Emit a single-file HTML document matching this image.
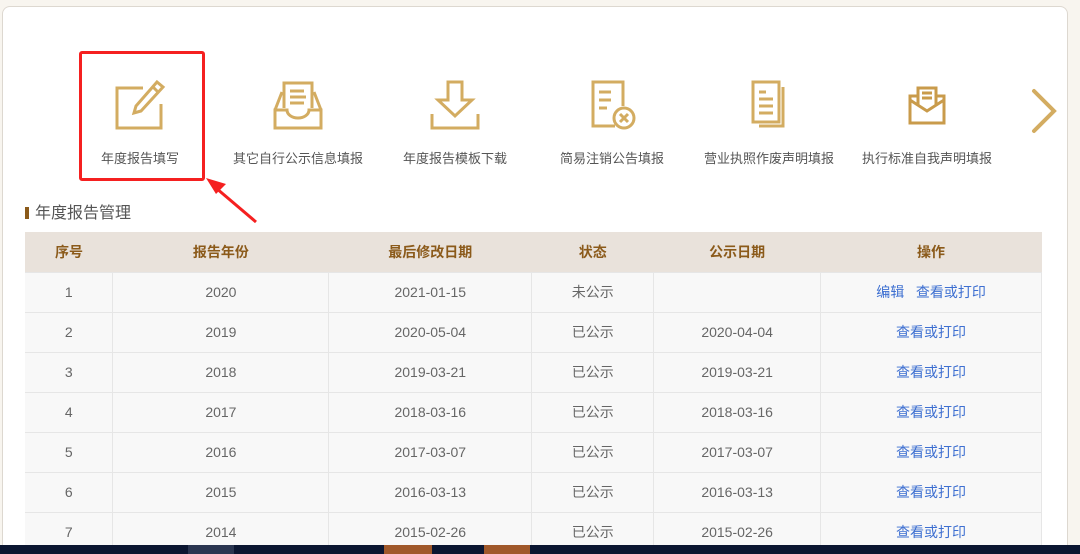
<!DOCTYPE html>
<html><head><meta charset="utf-8"><style>
*{margin:0;padding:0;box-sizing:border-box}
html,body{width:1080px;height:554px;overflow:hidden}
body{background:#f8f5ef;font-family:"Liberation Sans","Noto Sans CJK SC",sans-serif;position:relative}
.card{position:absolute;left:2px;top:6px;width:1066px;height:548px;background:#fff;border:1px solid #ddd8d0;border-bottom:none;border-radius:8px 8px 0 0}
.item{position:absolute;top:78px;width:150px;text-align:center;font-size:13px;color:#555}
.item svg{display:block;margin:0 auto}
.item span{display:block;position:absolute;top:70px;width:150px;left:0}
.red{position:absolute;left:79px;top:51px;width:126px;height:130px;border:3px solid #f52020;border-radius:3px}
.title{position:absolute;left:25px;top:199px;font-size:16px;color:#555}
.title:before{content:"";display:inline-block;width:4px;height:12px;background:#8b5a1a;margin-right:6px;vertical-align:-1px}
table{position:absolute;left:25px;top:232px;border-collapse:collapse;width:1017px;font-size:14px;color:#666;text-align:center}
th{background:#e9e2db;color:#8b5a1a;height:40px;font-weight:bold;font-size:14px}
td{background:#f8f8f8;height:40px;border:1px solid #e6e6e6}
tr td:first-child{border-left:none}
a{color:#3d6fd1;text-decoration:none}
.tb{position:absolute;left:0;top:545px;width:1080px;height:9px;background:#0b1631}
</style></head><body>
<div class="card"></div>
<div class="item" style="left:65px"><svg width="54" height="54" viewBox="0 0 54 54" fill="none" stroke="#d3ac61" stroke-width="3"><path d="M30 10H4V50H48V26"/><path d="M44 4l6 5-22 24-7 2 2-7z"/><path d="M40 9l5 5"/></svg><span>年度报告填写</span></div>
<div class="item" style="left:223px"><svg width="54" height="54" viewBox="0 0 54 54" fill="none" stroke="#d3ac61" stroke-width="3"><path d="M13 30V5H41V30"/><path d="M19 13H33M19 19H35M19 25H33"/><path d="M4 50V32H16a11 8 0 0 0 22 0H50V50Z"/><path d="M4 32L11 14M50 32L43 14"/></svg><span>其它自行公示信息填报</span></div>
<div class="item" style="left:380px"><svg width="54" height="54" viewBox="0 0 54 54" fill="none" stroke="#d3ac61" stroke-width="3"><path d="M20 4H34V22H44L27 38 10 22H20Z"/><path d="M4 36V50H50V36"/></svg><span>年度报告模板下载</span></div>
<div class="item" style="left:537px"><svg width="54" height="54" viewBox="0 0 54 54" fill="none" stroke="#d3ac61" stroke-width="3"><path d="M30 48H8V4H38V28"/><path d="M14 14H26M14 22H26M14 30H22"/><circle cx="39" cy="40" r="10"/><path d="M35 36l8 8M43 36l-8 8"/></svg><span>简易注销公告填报</span></div>
<div class="item" style="left:694px"><svg width="54" height="54" viewBox="0 0 54 54" fill="none" stroke="#d3ac61" stroke-width="3"><path d="M11 4H37V44H11Z"/><path d="M41 9V48H17"/><path d="M17 14H24M17 21H31M17 28H31M17 35H31"/></svg><span>营业执照作废声明填报</span></div>
<div class="item" style="left:852px"><svg width="54" height="54" viewBox="0 0 54 54" fill="none" stroke="#c99b4b" stroke-width="3"><path d="M18 18H10V45H44V18H36"/><path d="M10 22L27 33 44 22"/><path d="M18 28V10H36V28"/><path d="M22 15H32M22 20H32"/></svg><span>执行标准自我声明填报</span></div>
<svg style="position:absolute;left:1030px;top:88px" width="28" height="46" viewBox="0 0 28 46" fill="none" stroke="#d3ac61" stroke-width="4" stroke-linecap="round"><path d="M4 3L24 23 4 43"/></svg>
<div class="red"></div>
<svg style="position:absolute;left:200px;top:172px" width="64" height="56" viewBox="0 0 64 56"><path d="M56 50L16 16" stroke="#f52020" stroke-width="3"/><path d="M6 6L26 12 16 22Z" fill="#f52020"/></svg>
<div class="title">年度报告管理</div>
<table>
<colgroup><col style="width:88px"><col style="width:216px"><col style="width:203px"><col style="width:122px"><col style="width:167px"><col style="width:221px"></colgroup>
<tr><th>序号</th><th>报告年份</th><th>最后修改日期</th><th>状态</th><th>公示日期</th><th>操作</th></tr>
<tr><td>1</td><td>2020</td><td>2021-01-15</td><td>未公示</td><td></td><td><a>编辑</a>&nbsp;&nbsp; <a>查看或打印</a></td></tr>
<tr><td>2</td><td>2019</td><td>2020-05-04</td><td>已公示</td><td>2020-04-04</td><td><a>查看或打印</a></td></tr>
<tr><td>3</td><td>2018</td><td>2019-03-21</td><td>已公示</td><td>2019-03-21</td><td><a>查看或打印</a></td></tr>
<tr><td>4</td><td>2017</td><td>2018-03-16</td><td>已公示</td><td>2018-03-16</td><td><a>查看或打印</a></td></tr>
<tr><td>5</td><td>2016</td><td>2017-03-07</td><td>已公示</td><td>2017-03-07</td><td><a>查看或打印</a></td></tr>
<tr><td>6</td><td>2015</td><td>2016-03-13</td><td>已公示</td><td>2016-03-13</td><td><a>查看或打印</a></td></tr>
<tr><td>7</td><td>2014</td><td>2015-02-26</td><td>已公示</td><td>2015-02-26</td><td><a>查看或打印</a></td></tr>
</table>
<div class="tb"><div style="position:absolute;left:384px;width:48px;height:9px;background:#a0582a"></div><div style="position:absolute;left:484px;width:46px;height:9px;background:#a0582a"></div><div style="position:absolute;left:188px;width:46px;height:9px;background:#2a3550"></div></div>
</body></html>
